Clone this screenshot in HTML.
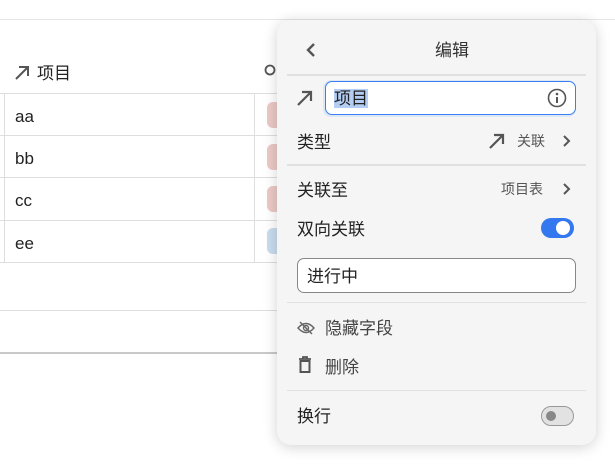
<!DOCTYPE html>
<html><head><meta charset="utf-8"><style>
*{margin:0;padding:0;box-sizing:border-box}
body{width:615px;height:465px;background:#fff;position:relative;overflow:hidden;font-family:"Liberation Sans","Noto Sans CJK SC",sans-serif;color:#222}
.a{position:absolute}
.hl{position:absolute;left:0;height:1px;background:#dedede}
.t{position:absolute;font-size:16px;line-height:20px}
.pill{position:absolute;left:267px;width:20px;height:26px;border-radius:6px}
.panel{position:absolute;left:277px;top:20px;width:319px;height:425px;background:#f5f5f5;border-radius:14px;box-shadow:0 2px 14px rgba(0,0,0,.18)}
.sep{position:absolute;left:10px;width:299px;height:2px;background:#e0e0e0}
.p{position:absolute;font-size:16px;line-height:20px;color:#222}
.s{font-size:14px;color:#555}
</style></head><body>
<div class="hl" style="top:19px;width:615px;background:#e6e6e6"></div>
<svg class="a" style="left:13px;top:64px" width="18" height="18" viewBox="0 0 18 18"><path d="M3 15L15 3M6 3h9v9" stroke="#555" stroke-width="2" fill="none"/></svg>
<div class="t" style="left:37px;top:64px;font-size:17px">项目</div>
<svg class="a" style="left:264px;top:64px" width="14" height="14"><circle cx="6" cy="6" r="4.5" stroke="#555" stroke-width="1.8" fill="none"/></svg>
<div class="hl" style="top:93px;width:290px"></div>
<div class="hl" style="top:135px;width:290px"></div>
<div class="hl" style="top:177px;width:290px"></div>
<div class="hl" style="top:220px;width:290px"></div>
<div class="hl" style="top:262px;width:290px"></div>
<div class="a" style="left:4px;top:93px;width:1px;height:169px;background:#dedede"></div>
<div class="a" style="left:254px;top:93px;width:1px;height:169px;background:#dedede"></div>
<div class="t" style="left:15px;top:107px;font-size:17px">aa</div>
<div class="t" style="left:15px;top:149px;font-size:17px">bb</div>
<div class="t" style="left:15px;top:191px;font-size:17px">cc</div>
<div class="t" style="left:15px;top:234px;font-size:17px">ee</div>
<div class="pill" style="top:102px;background:#ebc9c6"></div>
<div class="pill" style="top:144px;background:#ebc9c6"></div>
<div class="pill" style="top:186px;background:#ebc9c6"></div>
<div class="pill" style="top:228px;background:#c9dcee"></div>
<div class="hl" style="top:310px;width:290px"></div>
<div class="hl" style="top:352px;width:290px;height:2px;background:#c8c8c8"></div>

<div class="panel">
<svg class="a" style="left:27px;top:22px" width="14" height="16"><path d="M10 2L4 8l6 6" stroke="#555" stroke-width="2.4" fill="none"/></svg>
<div class="p" style="left:158px;top:21px;font-size:17px;color:#333">编辑</div>
<div class="sep" style="top:54px"></div>
<svg class="a" style="left:19px;top:69px" width="18" height="18"><path d="M2 16L15 3M6 3h9v9" stroke="#555" stroke-width="2.2" fill="none"/></svg>
<div class="a" style="left:46px;top:60px;width:253px;height:37px;border-radius:8px;background:#dde7f6"></div>
<div class="a" style="left:48px;top:61px;width:251px;height:34px;border-radius:7px;background:#fff;border:1.5px solid #3b7ef0"></div>
<div class="p" style="left:57px;top:69px;font-size:17px"><span style="background:#b4cdf3">项目</span></div>
<svg class="a" style="left:270px;top:68px" width="20" height="20"><circle cx="10" cy="10" r="8.5" stroke="#555" stroke-width="1.6" fill="none"/><circle cx="10" cy="6" r="1.3" fill="#555"/><path d="M10 9v6" stroke="#555" stroke-width="2"/></svg>
<div class="p" style="left:20px;top:113px;font-size:17px">类型</div>
<svg class="a" style="left:211px;top:112px" width="18" height="18"><path d="M2 16L15 3M6 3h9v9" stroke="#555" stroke-width="2.2" fill="none"/></svg>
<div class="p s" style="left:240px;top:111px">关联</div>
<svg class="a" style="left:285px;top:114px" width="10" height="14"><path d="M2 2l5 5-5 5" stroke="#555" stroke-width="2" fill="none"/></svg>
<div class="sep" style="top:144px"></div>
<div class="p" style="left:20px;top:161px;font-size:17px">关联至</div>
<div class="p s" style="left:224px;top:159px">项目表</div>
<svg class="a" style="left:285px;top:162px" width="10" height="14"><path d="M2 2l5 5-5 5" stroke="#555" stroke-width="2" fill="none"/></svg>
<div class="p" style="left:20px;top:200px;font-size:17px">双向关联</div>
<div class="a" style="left:264px;top:198px;width:33px;height:20px;border-radius:10px;background:#3478f0"><div class="a" style="left:15px;top:3px;width:14px;height:14px;border-radius:50%;background:#fff"></div></div>
<div class="a" style="left:20px;top:238px;width:279px;height:35px;border-radius:7px;background:#fff;border:1px solid #888"></div>
<div class="p" style="left:30px;top:247px;font-size:17px">进行中</div>
<div class="sep" style="top:282px;height:1px"></div>
<svg class="a" style="left:20px;top:300px" width="18" height="16"><path d="M1 8q8-9 16 0q-8 9-16 0z" stroke="#666" stroke-width="1.4" fill="none"/><circle cx="9" cy="8" r="2.5" stroke="#666" stroke-width="1.4" fill="none"/><path d="M3 2l12 12" stroke="#666" stroke-width="1.4"/></svg>
<div class="p" style="left:48px;top:299px;color:#444;font-size:17px">隐藏字段</div>
<svg class="a" style="left:21px;top:336px" width="14" height="18"><path d="M1 3h12M5 3V1h4v2" stroke="#555" stroke-width="1.8" fill="none"/><rect x="2.5" y="5" width="9" height="11" stroke="#555" stroke-width="2" fill="none"/></svg>
<div class="p" style="left:48px;top:338px;color:#444;font-size:17px">删除</div>
<div class="sep" style="top:370px;height:1px"></div>
<div class="p" style="left:20px;top:387px;font-size:17px">换行</div>
<div class="a" style="left:264px;top:386px;width:33px;height:20px;border-radius:10px;background:#e2e2e2;border:1px solid #999"><div class="a" style="left:4px;top:4px;width:10px;height:10px;border-radius:50%;background:#888"></div></div>
</div>
</body></html>
